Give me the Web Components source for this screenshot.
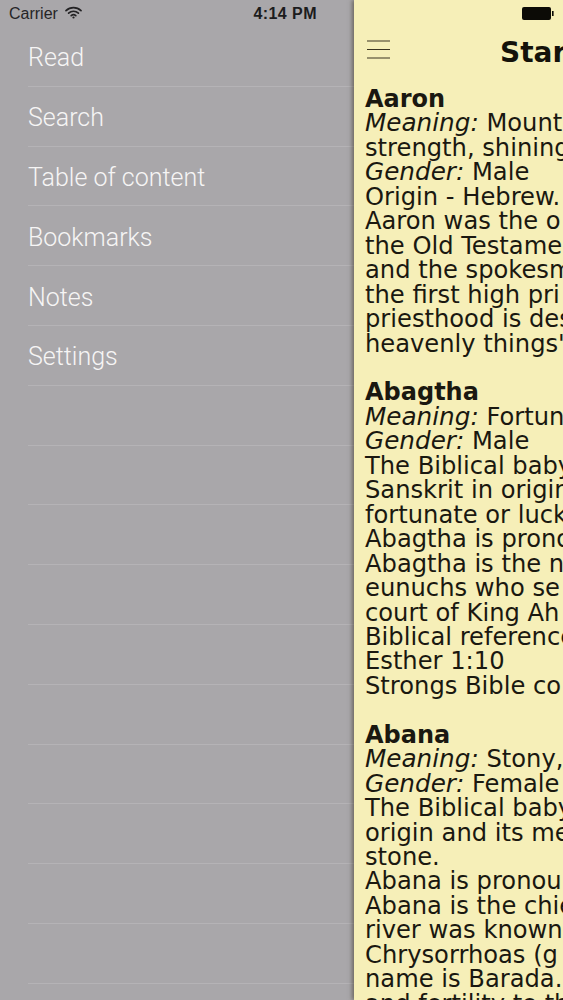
<!DOCTYPE html>
<html><head><meta charset="utf-8"><style>
html,body{margin:0;padding:0;height:1000px;overflow:hidden;background:#a9a7aa}
i{font-size:24.7px}
</style></head><body>
<app-shell>
<side-menu slot="menu">
<menu-row>Read</menu-row><menu-row>Search</menu-row><menu-row>Table of content</menu-row><menu-row>Bookmarks</menu-row><menu-row>Notes</menu-row><menu-row>Settings</menu-row>
<menu-row></menu-row><menu-row></menu-row><menu-row></menu-row><menu-row></menu-row><menu-row></menu-row><menu-row></menu-row><menu-row></menu-row><menu-row></menu-row><menu-row></menu-row><menu-row></menu-row>
</side-menu>
<reader-panel slot="reader">
<name-entry><span slot="name">Aaron</span>
<p><i>Meaning:</i> Mount</p><p>strength, shining</p><p><i>Gender:</i> Male</p><p>Origin - Hebrew.</p><p>Aaron was the o</p><p>the Old Testame</p><p>and the spokesm</p><p>the first high pri</p><p>priesthood is des</p><p>heavenly things"</p></name-entry>
<name-entry><span slot="name">Abagtha</span>
<p><i>Meaning:</i> Fortun</p><p><i>Gender:</i> Male</p><p>The Biblical baby</p><p>Sanskrit in origin</p><p>fortunate or luck</p><p>Abagtha is prono</p><p>Abagtha is the n</p><p>eunuchs who se</p><p>court of King Ah</p><p>Biblical reference</p><p>Esther 1:10</p><p>Strongs Bible co</p></name-entry>
<name-entry><span slot="name">Abana</span>
<p><i>Meaning:</i> Stony,</p><p><i>Gender:</i> Female</p><p>The Biblical baby</p><p>origin and its me</p><p>stone.</p><p>Abana is pronou</p><p>Abana is the chie</p><p>river was known</p><p>Chrysorrhoas (g</p><p>name is Barada.</p><p>and fertility to th</p></name-entry>
</reader-panel>
</app-shell>
<script>
function def(name, html){
  customElements.define(name, class extends HTMLElement{
    constructor(){super();this.attachShadow({mode:'open'}).innerHTML=html;}
  });
}
def('app-shell',`<style>
:host{display:flex;width:563px;height:1000px;overflow:hidden;position:relative;background:#a9a7aa;font-family:"Liberation Sans",Arial,sans-serif}
.menu{flex:0 0 354px;display:flex;flex-direction:column}
.reader{flex:0 0 auto;width:375px;height:1000px;position:relative;background:#f6efb8;box-shadow:-2px 0 4px rgba(60,55,40,.55)}
</style><div class="menu"><status-left></status-left><slot name="menu"></slot></div><div class="reader"><slot name="reader"></slot></div>`);
def('status-left',`<style>
:host{display:flex;align-items:center;height:27px;padding-left:9px;padding-right:37px;font:16px "Liberation Sans",Arial,sans-serif;color:#262527}
.w{margin-left:7px;margin-top:-2px;display:block}
.t{margin-left:auto;font-weight:700;font-size:16px;letter-spacing:.45px;color:#1c1c1d}
</style><span>Carrier</span><svg class="w" width="17" height="13" viewBox="0 0 17 13" fill="none" stroke="#232224" stroke-linecap="round"><path d="M1 4.6C5.2.6 11.8.6 16 4.6" stroke-width="1.7"/><path d="M3.6 7.2C6.4 4.6 10.6 4.6 13.4 7.2" stroke-width="1.7"/><path d="M6.2 9.6C7.5 8.5 9.5 8.5 10.8 9.6" stroke-width="1.7"/><circle cx="8.5" cy="11.5" r="1.1" fill="#232224" stroke="none"/></svg><span class="t">4:14 PM</span>`);
def('side-menu',`<style>
:host{display:block;padding-left:28px}
</style><slot></slot>`);
def('menu-row',`<style>
:host{display:flex;align-items:center;box-sizing:border-box;height:59.8px;border-bottom:1px solid #b5b3b6;font:300 25px/1 Roboto,"Open Sans",sans-serif;color:#f6f5f5;padding-top:3px}
</style><slot></slot>`);
def('reader-panel',`<style>
:host{display:block;height:1000px;overflow:hidden;font-family:"DejaVu Sans",Verdana,sans-serif;color:#1a1810}
.nav{display:flex;align-items:center;height:87px;box-sizing:border-box;position:relative;white-space:nowrap}
.title{margin-left:146px;margin-top:17px;font-size:28px;font-weight:700;color:#14120a}
.burger{position:absolute;left:13px;top:40px}
.batt{position:absolute;left:168px;top:6px}
.body{padding-left:11px;margin-top:0}
</style><div class="nav"><svg class="batt" width="35" height="14" viewBox="0 0 35 14"><rect x="0" y="1" width="29" height="13" rx="2" fill="#0c0b06"/><rect x="30" y="5" width="1.6" height="5" fill="#0c0b06"/></svg><svg class="burger" width="23" height="19" viewBox="0 0 23 19" stroke="#3a3420" stroke-width="1.2"><path d="M0 1h23M0 9.5h23M0 18h23"/></svg><span class="title">Star</span></div><div class="body"><slot></slot></div>`);
def('name-entry',`<style>
:host{display:block;font-size:24.2px;line-height:24.45px;white-space:nowrap;margin-bottom:24.45px}
.n{font-weight:700;display:block;font-size:24px}
::slotted(p){margin:0}
</style><div class="n"><slot name="name"></slot></div><slot></slot>`);
</script>
</body></html>
